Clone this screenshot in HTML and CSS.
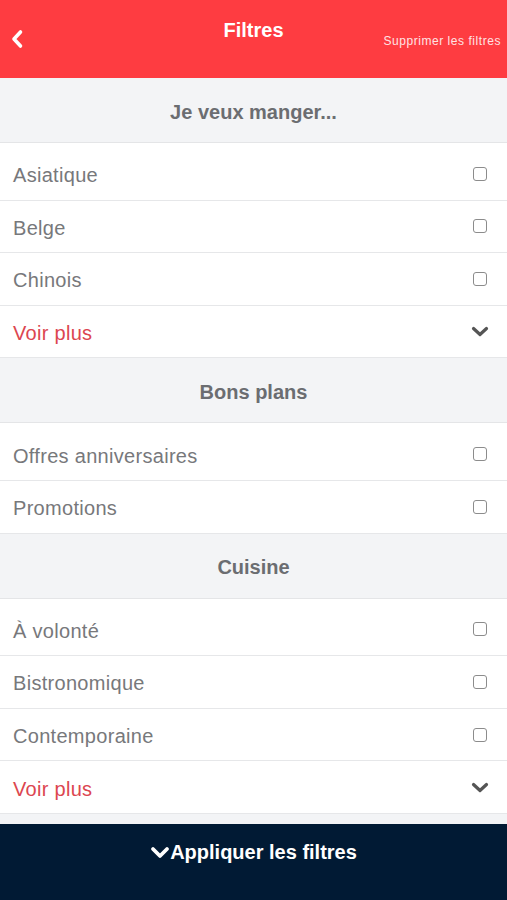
FILE: index.html
```html
<!DOCTYPE html>
<html lang="fr">
  <head>
    <meta charset="UTF-8" />
    <meta name="viewport" content="width=device-width" />
    <title>Filtres</title>
    <link rel="stylesheet" href="styles.css">
  </head>
  <body>
    <div class="app">
      <header class="topbar">
        <button class="back" aria-label="Retour">
          <svg width="14" height="20" viewBox="0 0 14 20">
            <polyline points="10.5,3 4,10 10.5,17" fill="none" stroke="#fff" stroke-width="3.6" stroke-linecap="round" stroke-linejoin="round" />
          </svg>
        </button>
        <h1 class="title">Filtres</h1>
        <a class="clear" href="#">Supprimer les filtres</a>
      </header>

      <div class="filters">
        <div class="section"><span>Je veux manger...</span></div>
        <label class="row first"><span class="label">Asiatique</span><span class="box"></span></label>
        <label class="row"><span class="label">Belge</span><span class="box"></span></label>
        <label class="row"><span class="label">Chinois</span><span class="box"></span></label>
        <div class="row more">
          <span class="label">Voir plus</span>
          <svg width="18" height="11" viewBox="0 0 18 11">
            <polyline points="2.5,2.5 9,8.5 15.5,2.5" fill="none" stroke="#555" stroke-width="3.2" stroke-linecap="round" stroke-linejoin="round" />
          </svg>
        </div>

        <div class="section"><span>Bons plans</span></div>
        <label class="row first"><span class="label">Offres anniversaires</span><span class="box"></span></label>
        <label class="row"><span class="label">Promotions</span><span class="box"></span></label>

        <div class="section"><span>Cuisine</span></div>
        <label class="row first"><span class="label">À volonté</span><span class="box"></span></label>
        <label class="row"><span class="label">Bistronomique</span><span class="box"></span></label>
        <label class="row"><span class="label">Contemporaine</span><span class="box"></span></label>
        <div class="row more">
          <span class="label">Voir plus</span>
          <svg width="18" height="11" viewBox="0 0 18 11">
            <polyline points="2.5,2.5 9,8.5 15.5,2.5" fill="none" stroke="#555" stroke-width="3.2" stroke-linecap="round" stroke-linejoin="round" />
          </svg>
        </div>
      </div>

      <button class="apply">
        <svg width="20" height="13" viewBox="0 0 20 13">
          <polyline points="3,3 10,10 17,3" fill="none" stroke="#fff" stroke-width="3.8" stroke-linecap="round" stroke-linejoin="round" />
        </svg>
        <span>Appliquer les filtres</span>
      </button>
    </div>
  </body>
</html>
```

FILE: styles.css
```css
body {
  margin: 0;
  padding: 0;
  font-family: "Liberation Sans", Arial, sans-serif;
  background-color: #fff;
}

.app {
  height: 900px;
  display: flex;
  flex-direction: column;
  overflow: hidden;
}

/* red top bar */
.topbar {
  height: 78px;
  flex-shrink: 0;
  background-color: #fe3c41;
  display: grid;
  grid-template-columns: 1fr auto 1fr;
  align-items: start;
}

.back {
  justify-self: start;
  margin: 29px 0 0 10px;
  padding: 0;
  border: none;
  background: none;
  line-height: 0;
}

.title {
  margin: 18px 0 0;
  font-size: 20px;
  line-height: 24px;
  font-weight: bold;
  color: #fff;
}

.clear {
  justify-self: end;
  margin: 34px 6px 0 0;
  font-size: 12px;
  line-height: 14px;
  letter-spacing: 0.55px;
  color: #ffe3e4;
  text-decoration: none;
  white-space: nowrap;
}

/* list */
.filters {
  flex: 1;
  overflow: hidden;
  background-color: #f3f4f6;
}

.section {
  height: 64px;
  display: flex;
  align-items: center;
  justify-content: center;
  background-color: #f3f4f6;
  border-bottom: 1px solid #e4e5e7;
  font-size: 20px;
  font-weight: bold;
  color: #6b6d71;
}

.section span {
  padding-top: 4px;
}

.row {
  height: 51.6px;
  box-sizing: content-box;
  display: flex;
  align-items: center;
  justify-content: space-between;
  padding: 0 20px 0 13px;
  background-color: #fff;
  border-bottom: 1px solid #e6e7e9;
  font-size: 20px;
  letter-spacing: 0.3px;
  color: #77787b;
}

.row.first {
  padding-top: 5px;
}

.label {
  padding-top: 4px;
}

.box {
  flex-shrink: 0;
  box-sizing: border-box;
  width: 14px;
  height: 14px;
  border: 1.6px solid #8c8c8c;
  border-radius: 3px;
}

.more {
  color: #dc4650;
}

.more svg {
  margin-right: -2px;
}

/* bottom button */
.apply {
  height: 76px;
  flex-shrink: 0;
  display: flex;
  align-items: flex-start;
  justify-content: center;
  padding: 16px 0 0;
  border: none;
  background-color: #011a34;
  color: #fff;
  font-family: "Liberation Sans", Arial, sans-serif;
  font-size: 20px;
  line-height: 24px;
  font-weight: bold;
}

.apply svg {
  margin-top: 6px;
}
```
